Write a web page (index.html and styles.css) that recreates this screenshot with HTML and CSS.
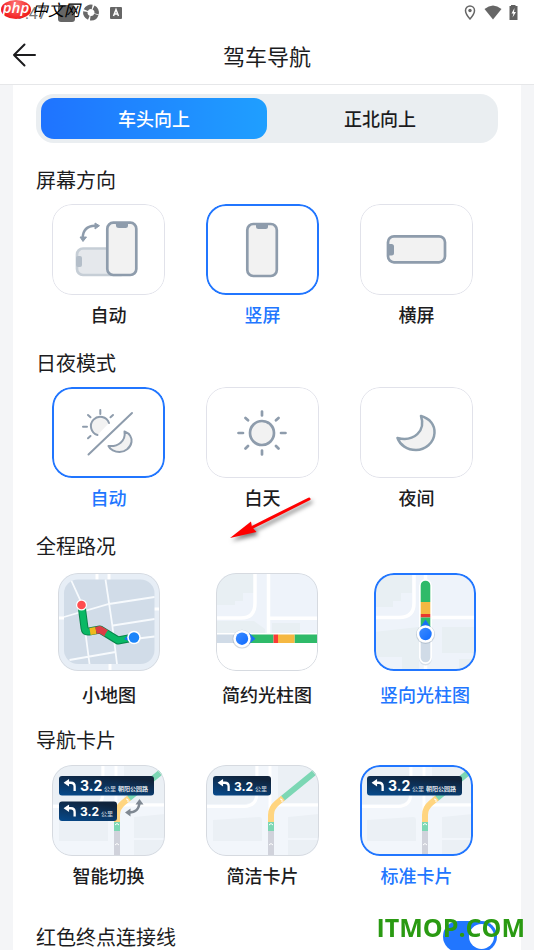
FILE: index.html
```html
<!DOCTYPE html>
<html lang="zh-CN">
<head>
  <meta charset="UTF-8">
  <meta name="viewport" content="width=device-width, initial-scale=1.0">
  <title>驾车导航</title>
  <link rel="stylesheet" href="styles.css">
</head>
<body>
  <!-- 公用图形 -->
  <svg class="defs" aria-hidden="true">
    <defs>
      <linearGradient id="pillFill" x1="0" y1="1" x2="0.5" y2="0">
        <stop offset="0" stop-color="#064a8c"/>
        <stop offset="1" stop-color="#10233b"/>
      </linearGradient>
      <linearGradient id="dotFill" x1="0" y1="0" x2="1" y2="1">
        <stop offset="0" stop-color="#3d8bff"/>
        <stop offset="1" stop-color="#0f6bff"/>
      </linearGradient>
      <symbol id="cursor" viewBox="0 0 20 20">
        <circle cx="10" cy="10.5" r="9.5" fill="#8494a8" opacity="0.35"/>
        <circle cx="10" cy="10" r="8.7" fill="#fff"/>
        <circle cx="10" cy="10" r="6.2" fill="url(#dotFill)"/>
      </symbol>
      <symbol id="roads" viewBox="0 0 113 91">
        <rect width="113" height="91" fill="#f2f6fb"/>
        <path d="M0 0H49V28Q49 39 40 39H0Z M7 55L53 52Q56 52 56 55V76H7Z M82 52L113 49V91H82Z M72 0H113V38H72Z" fill="#ebf0f5"/>
        <path d="M82 74H113" stroke="#f2f6fb" stroke-width="2"/>
        <path d="M0 41.500H38Q51 41 51 28V0M64 0V91M67 40H113" fill="none" stroke="#fff" stroke-width="3"/>
        <path d="M65 91V66" stroke="#d0d2db" stroke-width="6"/>
        <path d="M65 66V57M76.500 33.500L109 7" stroke="#7cd7b4" stroke-width="6"/>
        <path d="M65 57V50Q65 43 71 38L77 33" fill="none" stroke="#ffd580" stroke-width="6"/>
        <path d="M63 60L65 58.500L67 60M63 80L65 78.500L67 80M74 34L76 34.500L76 37" fill="none" stroke="#fff"/>
      </symbol>
      <symbol id="turn" viewBox="0 0 14 14">
        <path d="M5 4H8Q12 4 12 8V13" fill="none" stroke="#fff" stroke-width="2.500"/>
        <path d="M0 4L6 0V8Z" fill="#fff"/>
      </symbol>
      <symbol id="pillShort" viewBox="0 0 113 91">
        <rect x="7" y="11" width="58" height="19.500" rx="3" fill="url(#pillFill)"/>
        <use href="#turn" x="11.500" y="14" width="13" height="13"/>
        <text x="28" y="25.500" class="dist">3.2</text>
        <text x="49" y="25.500" class="unit">公里</text>
      </symbol>
      <symbol id="pillLong" viewBox="0 0 113 91">
        <rect x="7" y="11" width="95" height="19.500" rx="3" fill="url(#pillFill)"/>
        <use href="#turn" x="11.500" y="14" width="13" height="13"/>
        <text x="28" y="26" class="dist dist-lg">3.2</text>
        <text x="52" y="26" class="unit">公里</text>
        <text x="66" y="26" class="unit unit-road">朝阳公园路</text>
      </symbol>
    </defs>
  </svg>

  <div class="app">
    <header class="top">
      <div class="status">
        <div class="status-left">
          <span class="time">9:47</span>
          <svg width="64" height="20" viewBox="0 0 64 20">
            <rect x="0" y="2" width="17" height="17" rx="3" fill="#666"/>
            <circle cx="33" cy="9.500" r="5.700" fill="none" stroke="#686868" stroke-width="4.500" stroke-dasharray="7.450 1.500" transform="rotate(20 33 9.500)"/>
            <rect x="52" y="4" width="12" height="12" rx="1" fill="#666"/>
            <path d="M55.500 13L58 6.500L60.500 13M56 11H60" fill="none" stroke="#fff" stroke-width="1.500"/>
          </svg>
        </div>
        <svg class="status-right" width="54" height="18" viewBox="0 0 54 18">
          <path d="M6 2A4.500 4.500 0 0 1 10.500 6.500C10.500 10 6 15 6 15S1.500 10 1.500 6.500A4.500 4.500 0 0 1 6 2Z" fill="none" stroke="#666" stroke-width="1.500"/>
          <circle cx="6" cy="6.500" r="1.700" fill="#666"/>
          <path d="M20.500 5Q29 -2 37.500 5L29 15.500Z" fill="#666"/>
          <path d="M45.500 2H47V1H51.500V2H53.500V16H45.500Z" fill="#606060"/>
          <path d="M50.500 4L47.500 9.500H49.500L48.500 13.500L52 8H50Z" fill="#fff"/>
        </svg>
      </div>
      <div class="titlebar">
        <button class="back" type="button" aria-label="返回">
          <svg width="24" height="24" viewBox="0 0 24 24">
            <path d="M12.500 1.500L2 12L12.500 22.500M2 12H23" fill="none" stroke="#1c1c1e" stroke-width="2" stroke-linecap="round" stroke-linejoin="round"/>
          </svg>
        </button>
        <h1>驾车导航</h1>
      </div>
    </header>

    <main class="panel">
      <div class="segment" role="radiogroup" aria-label="地图朝向">
        <label><input type="radio" name="heading" checked><span>车头向上</span></label>
        <label><input type="radio" name="heading"><span>正北向上</span></label>
      </div>

      <section class="group" role="radiogroup" aria-labelledby="t-screen">
        <h2 id="t-screen">屏幕方向</h2>
        <div class="options">
          <label class="option">
            <input type="radio" name="screen">
            <span class="frame">
              <svg viewBox="0 0 113 91">
                <rect x="25" y="44.500" width="50" height="26.500" rx="6" fill="#e5e8ec" stroke="#c6ced6" stroke-width="2.700"/>
                <rect x="24" y="52" width="6" height="11" rx="2" fill="#b4bec9"/>
                <rect x="55.300" y="18.700" width="29" height="52.300" rx="6" fill="#f2f2f2" stroke="#8e9cac" stroke-width="2.700"/>
                <path d="M63.500 18H76V21.500Q76 24 73.500 24H67Q64 24 64 21.500Z" fill="#8e9cac"/>
                <path d="M30.700 34Q31 22 43 21.700" fill="none" stroke="#8e9cac" stroke-width="2.500"/>
                <path d="M43 19L47.500 21.700L43 25ZM28 33H34.500L31 37.500Z" fill="#8e9cac" stroke="#8e9cac" stroke-linejoin="round"/>
              </svg>
            </span>
            <span class="name">自动</span>
          </label>
          <label class="option">
            <input type="radio" name="screen" checked>
            <span class="frame">
              <svg viewBox="0 0 113 91">
                <rect x="41.300" y="20" width="29.500" height="52" rx="6" fill="#f2f2f2" stroke="#8e9cac" stroke-width="2.700"/>
                <path d="M50 19H62V22.500Q62 25 59.500 25H52.500Q50 25 50 22.500Z" fill="#8e9cac"/>
              </svg>
            </span>
            <span class="name">竖屏</span>
          </label>
          <label class="option">
            <input type="radio" name="screen">
            <span class="frame">
              <svg viewBox="0 0 113 91">
                <rect x="28" y="32.300" width="57" height="26" rx="6" fill="#f2f2f2" stroke="#8e9cac" stroke-width="2.700"/>
                <path d="M27 40H31.500Q34 40 34 42.500V49Q34 51.500 31.500 51.500H27Z" fill="#8e9cac"/>
              </svg>
            </span>
            <span class="name">横屏</span>
          </label>
        </div>
      </section>

      <section class="group" role="radiogroup" aria-labelledby="t-mode">
        <h2 id="t-mode">日夜模式</h2>
        <div class="options">
          <label class="option">
            <input type="radio" name="mode" checked>
            <span class="frame">
              <svg viewBox="0 0 113 91">
                <g fill="none" stroke="#8e9cac" stroke-width="2" stroke-linecap="round">
                  <path d="M57 36A9.300 9.300 0 1 0 45.500 48" fill="#f2f2f2"/>
                  <path d="M48.300 23V27M31 39.700H35M36 28L38.500 30.300M61 28L58.500 30.300M36 51.300L38.500 49"/>
                  <path d="M36.500 67.500L80 26"/>
                  <path d="M72.500 44.500C78 46.500 80 51 79.500 55C78.500 61 73 65 67.500 65C63 65 58 62.500 56.500 59C66 60 74 54 72.500 44.500Z" fill="#f2f2f2" stroke-linejoin="round"/>
                </g>
              </svg>
            </span>
            <span class="name">自动</span>
          </label>
          <label class="option">
            <input type="radio" name="mode">
            <span class="frame">
              <svg viewBox="0 0 113 91">
                <g fill="none" stroke="#8e9cac" stroke-width="2.700" stroke-linecap="round">
                  <circle cx="56" cy="46" r="12" fill="#f2f2f2"/>
                  <path d="M56 24.500V28.500M56 63.500V67.500M32.500 46H37M75 46H79.500M39.500 31L42 33.300M72.500 31L70 33.300M39.500 61.500L42 59M72.500 61.500L70 59"/>
                </g>
              </svg>
            </span>
            <span class="name">白天</span>
          </label>
          <label class="option">
            <input type="radio" name="mode">
            <span class="frame">
              <svg viewBox="0 0 113 91">
                <path d="M61 29C70 31.500 75 38 74.500 46C74 56 65 63 56 63C47 63 40 58 37.500 51C54 55 66 44 61 29Z" fill="#f2f2f2" stroke="#8e9fae" stroke-width="2.500" stroke-linejoin="round"/>
              </svg>
            </span>
            <span class="name">夜间</span>
          </label>
        </div>
      </section>

      <section class="group" role="radiogroup" aria-labelledby="t-traffic">
        <h2 id="t-traffic">全程路况</h2>
        <div class="options options-traffic">
          <label class="option">
            <input type="radio" name="traffic">
            <span class="frame">
              <svg viewBox="0 0 102 98" preserveAspectRatio="xMidYMid slice">
                <rect width="102" height="98" fill="#e7eef6"/>
                <path d="M0 45H8M96 36H102M39 0V7M51 0V7M52 91V98" stroke="#fff" stroke-width="3"/>
                <rect x="6" y="6.500" width="90.500" height="84.500" rx="14" fill="#d1dce8"/>
                <path d="M13.500 8L24 31L28 64L31.500 91M47.500 6.500L54 50L59 91M6 44L51 31L96.500 24M55 52.500L96.500 46M11.500 87L57.500 79M76 66L96.500 63.500" fill="none" stroke="#f7fafd" stroke-width="1.800"/>
                <g fill="none" stroke-linejoin="round">
                  <path d="M23.500 32L26.500 55Q27 59 31 58.500L42 56.500L60 67.500L76 64.500" stroke="#078449" stroke-width="8"/>
                  <path d="M23.500 32L26.500 55Q27 59 31 58.500H33" stroke="#09b865" stroke-width="6"/>
                  <path d="M32 58.500L38 57.500" stroke="#f0b81c" stroke-width="7"/>
                  <path d="M38 57.500L42 56.500L48.500 60.500" stroke="#db3e45" stroke-width="7"/>
                  <path d="M48 60L60 67.500L70 65.500" stroke="#09b865" stroke-width="6"/>
                </g>
                <path d="M66 66L73 60V69Z" fill="#1671f5"/>
                <circle cx="23.500" cy="32" r="5.500" fill="#fff"/>
                <circle cx="23.500" cy="32" r="4.300" fill="#ff4d4f"/>
                <circle cx="76" cy="64.500" r="6.800" fill="#fff"/>
                <circle cx="76" cy="64.500" r="5.200" fill="#1a84fa"/>
              </svg>
            </span>
            <span class="name">小地图</span>
          </label>
          <label class="option">
            <input type="radio" name="traffic">
            <span class="frame">
              <svg viewBox="0 0 102 98" preserveAspectRatio="xMidYMid slice">
                <rect width="102" height="98" fill="#fff"/>
                <rect width="102" height="60" fill="#eef3fa"/>
                <path d="M0 0H38V20H27V28H19V32H0ZM0 48H38L49 56V60H0ZM56 50H84V60H56Z" fill="#e8eff3"/>
                <path d="M0 45H25Q39 45 39 30V0M52.500 0V60M52.500 45.300H102" fill="none" stroke="#fff" stroke-width="3.500"/>
                <path d="M0 65.700H26" stroke="#d0dbe7" stroke-width="8.500"/>
                <path d="M34 65.700H57.500M78.500 65.700H102" stroke="#2fba69" stroke-width="8.500"/>
                <path d="M57.500 65.700H62" stroke="#fb3a36" stroke-width="8.500"/>
                <path d="M62 65.700H78.500" stroke="#f5b842" stroke-width="8.500"/>
                <path d="M33 60L39.500 65.700L33 71Z" fill="#1671f5"/>
                <use href="#cursor" x="16" y="55.700" width="20" height="20"/>
              </svg>
            </span>
            <span class="name">简约光柱图</span>
          </label>
          <label class="option">
            <input type="radio" name="traffic" checked>
            <span class="frame">
              <svg viewBox="0 0 102 98" preserveAspectRatio="xMidYMid slice">
                <rect width="102" height="98" fill="#eef3fa"/>
                <path d="M0 0H38V20H27V28H19V34H0ZM0 59L45 54V98H28V84H0ZM68 54H102V80H68ZM85 86H102V98H85Z" fill="#e8eff3"/>
                <path d="M0 44.500H25Q40 44.500 40 30V0M51.500 0V98M57 44.500H102" fill="none" stroke="#fff" stroke-width="3.500"/>
                <rect x="45" y="6.500" width="13" height="86" rx="6.500" fill="#d9e1ea"/>
                <rect x="45" y="6" width="13" height="85" rx="6.500" fill="#fff"/>
                <path d="M46.700 29V12.500A4.800 4.800 0 0 1 56.300 12.500V29Z" fill="#2fba69"/>
                <rect x="46.700" y="29" width="9.600" height="12" fill="#f5b842"/>
                <rect x="46.700" y="41" width="9.600" height="3.500" fill="#e8382f"/>
                <rect x="46.700" y="44.500" width="9.600" height="12" fill="#2fba69"/>
                <path d="M46.700 60V84.500A4.800 4.800 0 0 0 56.300 84.500V60Z" fill="#d0dbe7"/>
                <path d="M46.500 54L51.500 46.500L56.500 54Z" fill="#1671f5"/>
                <use href="#cursor" x="41.500" y="51" width="20" height="20"/>
              </svg>
            </span>
            <span class="name">竖向光柱图</span>
          </label>
        </div>
      </section>

      <section class="group group-cards" role="radiogroup" aria-labelledby="t-card">
        <h2 id="t-card">导航卡片</h2>
        <div class="options">
          <label class="option">
            <input type="radio" name="card">
            <span class="frame">
              <svg viewBox="0 0 113 91" preserveAspectRatio="xMidYMid slice">
                <use href="#roads" width="113" height="91"/>
                <use href="#pillLong" width="113" height="91"/>
                <use href="#pillShort" y="25.500" width="113" height="91"/>
                <path d="M76 47.500Q87 48 87.500 37" fill="none" stroke="#7f8892" stroke-width="2.500"/>
                <path d="M73 47.500L78.500 43.500V51.500ZM83.500 39.500L87.500 34L91.500 39.500Z" fill="#7f8892"/>
              </svg>
            </span>
            <span class="name">智能切换</span>
          </label>
          <label class="option">
            <input type="radio" name="card">
            <span class="frame">
              <svg viewBox="0 0 113 91" preserveAspectRatio="xMidYMid slice">
                <use href="#roads" width="113" height="91"/>
                <use href="#pillShort" width="113" height="91"/>
              </svg>
            </span>
            <span class="name">简洁卡片</span>
          </label>
          <label class="option">
            <input type="radio" name="card" checked>
            <span class="frame">
              <svg viewBox="0 0 113 91" preserveAspectRatio="xMidYMid slice">
                <use href="#roads" width="113" height="91"/>
                <use href="#pillLong" width="113" height="91"/>
              </svg>
            </span>
            <span class="name">标准卡片</span>
          </label>
        </div>
      </section>

      <div class="switch-row">
        <label for="redLine">红色终点连接线</label>
        <input id="redLine" class="switch" type="checkbox" role="switch" checked>
      </div>

      <svg class="pointer" width="90" height="52" viewBox="0 0 90 52" aria-hidden="true">
        <path d="M81 4L25 32" stroke="#f00" stroke-width="3" stroke-linecap="round"/>
        <path d="M2 43L23 26.500L24 32L28.500 37Z" fill="#f00"/>
      </svg>
    </main>
  </div>

  <!-- 站点水印 -->
  <div class="mark-top">
    <span class="php">php</span>
    <span class="cn">中文网</span>
  </div>
  <div class="mark-bottom">ITMOP.COM</div>
</body>
</html>
```

FILE: styles.css
```css
* {
  box-sizing: border-box;
}

body {
  margin: 0;
  background-color: #f4f5f7;
  color: #1c1c1e;
  font-family: "Noto Sans CJK SC", sans-serif;
}

h1, h2 {
  margin: 0;
  font-weight: 400;
}

.defs {
  position: absolute;
  width: 0;
  height: 0;
}

.app {
  display: flex;
  flex-direction: column;
  height: 100vh;
}

/* header */
.top {
  flex: none;
  background-color: #fff;
  border-bottom: 1px solid #e6e7e9;
}

.status {
  display: flex;
  justify-content: space-between;
  align-items: center;
  height: 26px;
  padding: 0 16px;
}

.status-left {
  display: flex;
  align-items: center;
  gap: 10px;
}

.time {
  width: 32px;
  color: #777;
  font-family: Roboto, sans-serif;
  font-size: 16px;
}

.titlebar {
  display: grid;
  grid-template-columns: 48px 1fr 48px;
  align-items: center;
  height: 58px;
}

.titlebar h1 {
  font-size: 22px;
  line-height: 32px;
  text-align: center;
}

.back {
  display: flex;
  padding: 0 12px;
  border: none;
  background: none;
  cursor: pointer;
}

/* settings panel */
.panel {
  position: relative;
  flex: 1;
  min-height: 0;
  margin: 0 13px;
  padding: 9px 23px 0;
  overflow-x: hidden;
  overflow-y: auto;
  scrollbar-width: none;
  background-color: #fff;
}

.segment input,
.option input {
  position: absolute;
  opacity: 0;
}

.segment {
  display: grid;
  grid-template-columns: 1fr 1fr;
  margin-bottom: 23px;
  padding: 4px 5px;
  border-radius: 18px;
  background-color: #eaeef1;
}

.segment span {
  display: block;
  border-radius: 13px;
  font-size: 18px;
  font-weight: 500;
  line-height: 41px;
  text-align: center;
  cursor: pointer;
}

.segment input:checked + span {
  background: linear-gradient(90deg, #1f73ff, #1f9fff);
  color: #fff;
}

.group {
  margin-bottom: 21px;
}

.group h2,
.switch-row label {
  font-size: 20px;
  line-height: 28px;
}

.options {
  display: grid;
  grid-template-columns: repeat(3, 1fr);
  gap: 41px;
  padding: 10px 25px 0 16px;
}

.option {
  display: flex;
  flex-direction: column;
  align-items: center;
  cursor: pointer;
}

.frame {
  position: relative;
  width: 100%;
  height: 91px;
  border-radius: 20px;
  overflow: hidden;
}

.frame::after {
  content: "";
  position: absolute;
  inset: 0;
  border: 1px solid #e1e2ea;
  border-radius: 20px;
}

.frame svg {
  display: block;
  width: 100%;
  height: 100%;
}

.name {
  margin-top: 5px;
  font-size: 18px;
  font-weight: 500;
  line-height: 28px;
  white-space: nowrap;
}

.option input:checked + .frame::after {
  border: 2px solid #2176ff;
}

.option input:checked ~ .name {
  color: #2176ff;
}

.options-traffic {
  gap: 56px;
  padding: 13px 22px 0;
}

.options-traffic .frame {
  height: 98px;
}

.options-traffic .name {
  margin-top: 9px;
}

.options-traffic .frame::after,
.group-cards .frame::after {
  border-color: #d6dae0;
}

.group-cards {
  margin-top: -3px;
  margin-bottom: 32px;
}

.group-cards .options {
  padding-top: 11px;
}

/* text on the navigation card previews */
.dist {
  fill: #fff;
  font-family: Inter, sans-serif;
  font-size: 12px;
  font-weight: 700;
}

.dist-lg {
  font-size: 14px;
}

.unit {
  fill: #c9d4df;
  font-size: 6px;
  font-weight: 500;
}

.unit-road {
  fill: #fff;
}

/* switch */
.switch-row {
  display: flex;
  justify-content: space-between;
  align-items: center;
}

.switch {
  width: 54px;
  height: 31px;
  margin: 0 1px 0 0;
  padding: 3px;
  appearance: none;
  border-radius: 16px;
  background-color: #c8ccd2;
  cursor: pointer;
}

.switch::before {
  content: "";
  display: block;
  width: 25px;
  height: 25px;
  border-radius: 50%;
  background-color: #fff;
}

.switch:checked {
  background-color: #2176ff;
}

.switch:checked::before {
  margin-left: auto;
}

/* overlays */
.pointer {
  position: absolute;
  top: 410px;
  left: 215px;
  filter: drop-shadow(2px 3px 2px rgba(0, 0, 0, 0.5));
  pointer-events: none;
}

.mark-top {
  position: absolute;
  top: 0;
  left: 1px;
  display: flex;
  align-items: center;
  gap: 1px;
  height: 19px;
}

.php {
  width: 30px;
  height: 19px;
  border-radius: 50%;
  background: radial-gradient(circle at 50% 25%, #ff7a7a, #f01818 75%);
  color: #fff;
  font-family: "Open Sans", sans-serif;
  font-size: 15px;
  font-style: italic;
  font-weight: 600;
  line-height: 15px;
  text-align: center;
}

.cn {
  color: #000;
  font-size: 16px;
  font-style: italic;
  line-height: 19px;
}

.mark-bottom {
  position: absolute;
  right: 9px;
  bottom: 6px;
  color: #2a9a12;
  font-family: "Open Sans", sans-serif;
  font-size: 25px;
  font-weight: 700;
  line-height: 34px;
}
```
